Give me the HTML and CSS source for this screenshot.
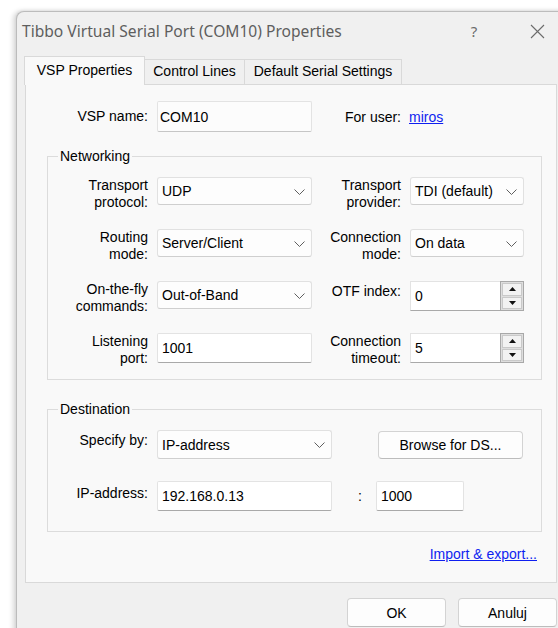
FILE: index.html
```html
<!DOCTYPE html>
<html lang="pl">
<head>
<meta charset="utf-8">
<title>Tibbo Virtual Serial Port (COM10) Properties</title>
<link rel="stylesheet" href="styles.css">
</head>
<body>
<div class="window">
  <div class="titlebar">
    <span class="title">Tibbo Virtual Serial Port (COM10) Properties</span>
    <span class="cap-btn help">?</span>
    <span class="cap-btn close">
      <svg width="15" height="15" viewBox="0 0 15 15"><path d="M1 1L14 14M14 1L1 14" stroke="#6b6b6b" stroke-width="1.1" fill="none"/></svg>
    </span>
  </div>

  <div class="tabs">
    <div class="tab tab-vsp active">VSP Properties</div>
    <div class="tab tab-lines">Control Lines</div>
    <div class="tab tab-serial">Default Serial Settings</div>
  </div>

  <div class="panel">
    <div class="vsp-row">
      <span class="label">VSP name:</span>
      <div class="input readonly vsp-name">COM10</div>
      <span class="for-user">For user:</span>
      <a class="link">miros</a>
    </div>

    <fieldset class="group">
      <legend>Networking</legend>
      <div class="net-grid">
        <span class="label">Transport<br>protocol:</span>
        <div class="select">UDP<svg class="chev" width="11" height="6" viewBox="0 0 11 6"><path d="M0.5 0.5L5.5 5.5L10.5 0.5" fill="none" stroke="#5f5f5f"/></svg></div>
        <span class="label">Transport<br>provider:</span>
        <div class="select">TDI (default)<svg class="chev" width="11" height="6" viewBox="0 0 11 6"><path d="M0.5 0.5L5.5 5.5L10.5 0.5" fill="none" stroke="#5f5f5f"/></svg></div>

        <span class="label">Routing<br>mode:</span>
        <div class="select">Server/Client<svg class="chev" width="11" height="6" viewBox="0 0 11 6"><path d="M0.5 0.5L5.5 5.5L10.5 0.5" fill="none" stroke="#5f5f5f"/></svg></div>
        <span class="label">Connection<br>mode:</span>
        <div class="select">On data<svg class="chev" width="11" height="6" viewBox="0 0 11 6"><path d="M0.5 0.5L5.5 5.5L10.5 0.5" fill="none" stroke="#5f5f5f"/></svg></div>

        <span class="label">On-the-fly<br>commands:</span>
        <div class="select">Out-of-Band<svg class="chev" width="11" height="6" viewBox="0 0 11 6"><path d="M0.5 0.5L5.5 5.5L10.5 0.5" fill="none" stroke="#5f5f5f"/></svg></div>
        <span class="label single">OTF index:</span>
        <div class="spin">
          <div class="spin-field">0</div>
          <div class="spin-btns">
            <span class="spin-btn"><svg width="7" height="4" viewBox="0 0 7 4"><path d="M0 4L3.5 0L7 4Z" fill="#111"/></svg></span>
            <span class="spin-btn"><svg width="7" height="4" viewBox="0 0 7 4"><path d="M0 0L7 0L3.5 4Z" fill="#111"/></svg></span>
          </div>
        </div>

        <span class="label">Listening<br>port:</span>
        <div class="input">1001</div>
        <span class="label">Connection<br>timeout:</span>
        <div class="spin">
          <div class="spin-field">5</div>
          <div class="spin-btns">
            <span class="spin-btn"><svg width="7" height="4" viewBox="0 0 7 4"><path d="M0 4L3.5 0L7 4Z" fill="#111"/></svg></span>
            <span class="spin-btn"><svg width="7" height="4" viewBox="0 0 7 4"><path d="M0 0L7 0L3.5 4Z" fill="#111"/></svg></span>
          </div>
        </div>
      </div>
    </fieldset>

    <fieldset class="group dest">
      <legend>Destination</legend>
      <div class="dest-grid">
        <span class="label single">Specify by:</span>
        <div class="select tall">IP-address<svg class="chev" width="11" height="6" viewBox="0 0 11 6"><path d="M0.5 0.5L5.5 5.5L10.5 0.5" fill="none" stroke="#5f5f5f"/></svg></div>
        <span></span>
        <div class="button browse">Browse for DS...</div>

        <span class="label single low">IP-address:</span>
        <div class="input">192.168.0.13</div>
        <span class="colon">:</span>
        <div class="input port">1000</div>
      </div>
    </fieldset>

    <div class="link-row"><a class="link">Import &amp; export...</a></div>
  </div>

  <div class="buttons">
    <div class="button">OK</div>
    <div class="button">Anuluj</div>
  </div>
</div>
</body>
</html>
```

FILE: styles.css
```css
* {
  box-sizing: border-box;
}

html,
body {
  margin: 0;
  height: 100%;
  overflow: hidden;
  background: #ffffff;
}

body {
  font-family: "Liberation Sans", Arial, sans-serif;
  font-size: 14px;
  color: #000;
}

/* dialog frame */
.window {
  margin: 11px 0 0 16px;
  width: 549px;
  height: 640px;
  background: #f0f0f0;
  border: 1px solid #bcbcbc;
  border-right: 0;
  border-bottom: 0;
  border-radius: 8px 0 0 0;
  box-shadow: -3px 0 5px rgba(0, 0, 0, 0.15), 0 -1px 3px rgba(0, 0, 0, 0.06);
}

.titlebar {
  display: flex;
  align-items: center;
  height: 38px;
  padding: 0 5px 0 5px;
}

.title {
  font-family: "Noto Sans", "Liberation Sans", sans-serif;
  font-size: 15.6px;
  color: #5e5e5e;
}

.cap-btn {
  display: flex;
  align-items: center;
  justify-content: center;
  width: 46px;
  height: 38px;
  color: #6b6b6b;
  font-family: "Noto Sans", sans-serif;
  font-size: 15px;
}

.help {
  margin-left: auto;
  margin-right: 17px;
}

/* tab strip */
.tabs {
  display: flex;
  align-items: flex-end;
  height: 28px;
  margin-top: 6px;
  padding: 0 8px;
}

.tab {
  flex: none;
  height: 25px;
  line-height: 23px;
  text-align: center;
  background: #f0f0f0;
  border: 1px solid #d9d9d9;
  border-bottom: 0;
  margin-left: -1px;
  white-space: nowrap;
}

.tab-vsp {
  width: 121px;
}

.tab-lines {
  width: 101px;
}

.tab-serial {
  width: 158px;
}

.tab.active {
  position: relative;
  z-index: 1;
  height: 29px;
  margin-bottom: -1px;
  line-height: 26px;
  background: #f9f9f9;
}

.panel {
  height: 499px;
  margin: 0 8px;
  padding: 16px 0 0 21px;
  background: #f9f9f9;
  border: 1px solid #d9d9d9;
}

.label {
  line-height: 17px;
  text-align: right;
  white-space: nowrap;
}

.link {
  color: #0f1ff0;
  text-decoration: underline;
  cursor: pointer;
}

/* VSP name row */
.vsp-row {
  display: flex;
  align-items: center;
  height: 31px;
}

.vsp-row .label {
  width: 101px;
  margin-right: 9px;
}

.for-user {
  margin-left: 33px;
  margin-right: 8px;
}

/* edit boxes and combo boxes */
.input {
  display: flex;
  align-items: center;
  height: 30px;
  padding-left: 4px;
  background: #ffffff;
  border: 1px solid #e3e3e3;
  border-bottom-color: #a9a9a9;
  border-radius: 2px;
}

.input.readonly {
  background: #fcfcfc;
  border-bottom-color: #c6c6c6;
}

.vsp-name {
  width: 155px;
  height: 31px;
  padding-left: 2px;
}

.select {
  display: flex;
  align-items: center;
  justify-content: space-between;
  height: 28px;
  padding: 0 6px 0 4px;
  background: #fdfdfd;
  border: 1px solid #e1e1e1;
  border-bottom-color: #cfcfcf;
  border-radius: 3px;
  white-space: nowrap;
}

.select.tall {
  height: 29px;
}

.chev {
  flex: none;
  margin-top: 1px;
}

/* spin (up/down) edit */
.spin {
  display: flex;
  height: 30px;
}

.spin-field {
  flex: 1;
  display: flex;
  align-items: center;
  padding-left: 4px;
  background: #ffffff;
  border: 1px solid #e3e3e3;
  border-right: 0;
  border-bottom-color: #a9a9a9;
}

.spin-btns {
  display: flex;
  flex-direction: column;
  gap: 1px;
  width: 24px;
  padding: 1px;
  background: #dedede;
  border: 1px solid #a8a8a8;
}

.spin-btn {
  flex: 1;
  display: flex;
  align-items: center;
  justify-content: center;
  background: #f2f2f2;
  border: 1px solid #c9c9c9;
}

/* group boxes */
.group {
  width: 495px;
  margin: 16px 0 0;
  padding: 12px 0 12px;
  border: 1px solid #dcdcdc;
  min-width: 0;
}

.group legend {
  margin-left: 10px;
  padding: 0 2px;
  line-height: 17px;
}

.net-grid {
  display: grid;
  grid-template-columns: 109px 155px 98px 114px;
  row-gap: 18px;
  align-items: start;
}

.net-grid .label,
.dest-grid .label {
  padding-right: 9px;
}

.label.single {
  padding-top: 2px;
}

.label.low {
  padding-top: 4px;
}

.dest {
  margin-top: 21px;
  padding-bottom: 20px;
}

.dest-grid {
  display: grid;
  grid-template-columns: 109px 175px 44px 147px;
  row-gap: 22px;
  align-items: start;
}

.colon {
  line-height: 30px;
  text-align: right;
  padding-right: 14px;
}

.port {
  width: 88px;
}

/* push buttons */
.button {
  display: flex;
  align-items: center;
  justify-content: center;
  width: 99px;
  height: 29px;
  background: #fdfdfd;
  border: 1px solid #d3d3d3;
  border-bottom-color: #bcbcbc;
  border-radius: 4px;
}

.browse {
  width: 145px;
  height: 28px;
  margin: 1px 0 0 2px;
}

.link-row {
  width: 495px;
  margin-top: 14px;
  padding-right: 5px;
  line-height: 17px;
  text-align: right;
}

.buttons {
  display: flex;
  justify-content: flex-end;
  gap: 12px;
  margin-top: 15px;
  padding-right: 8px;
}
```
